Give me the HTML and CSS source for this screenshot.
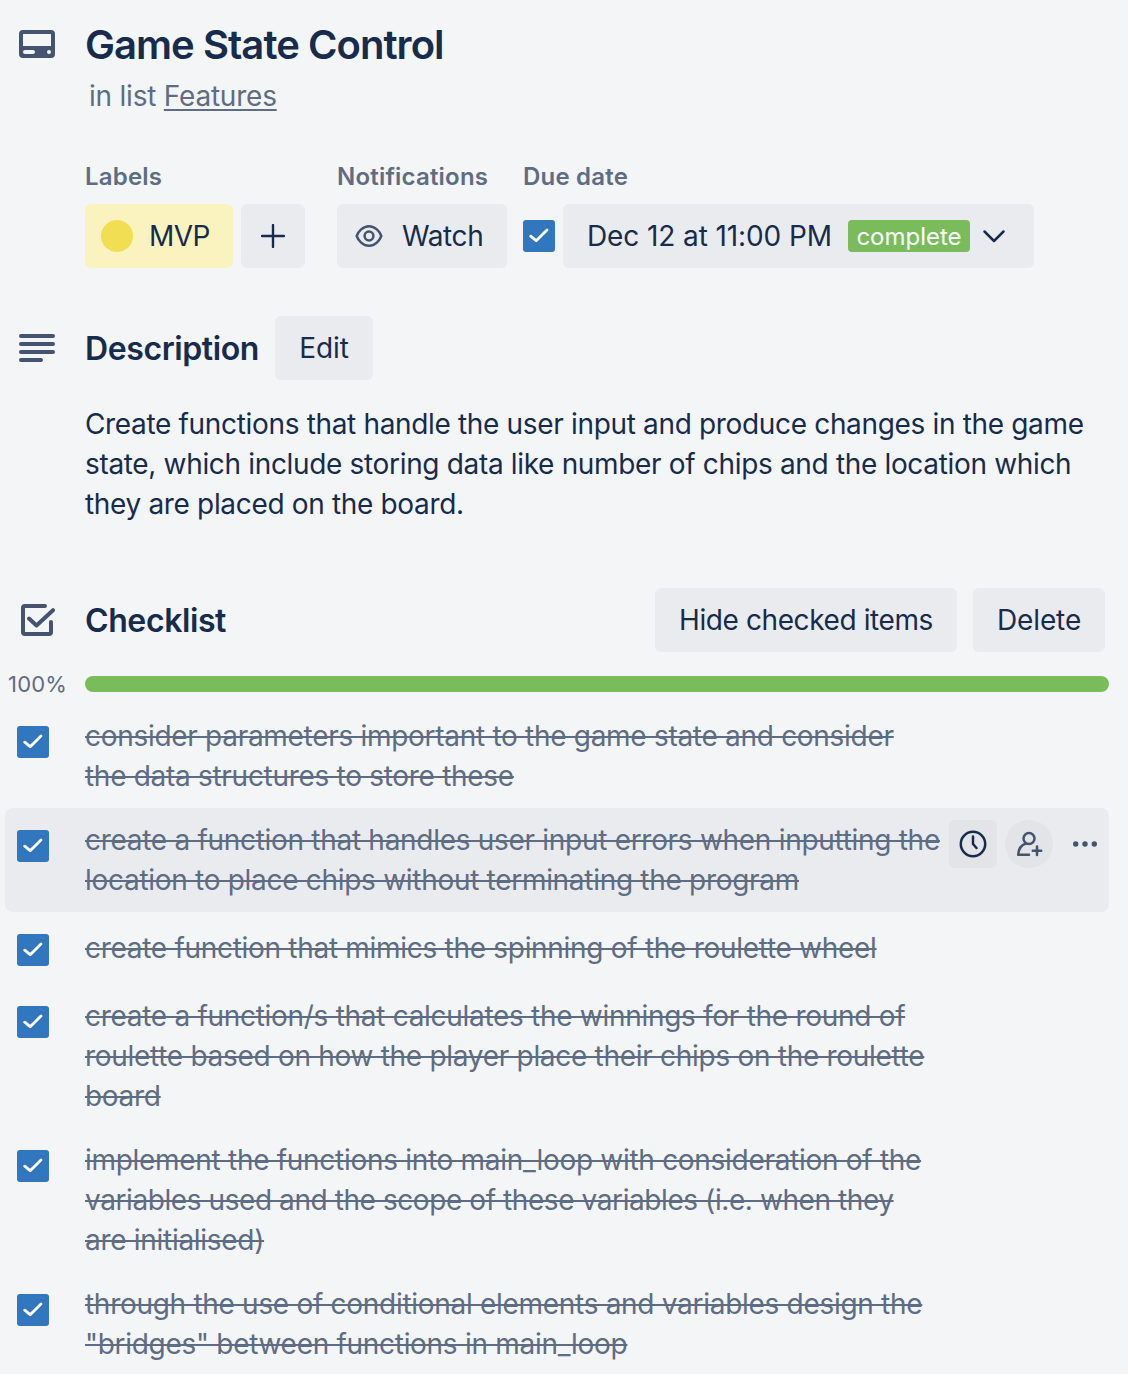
FILE: index.html
```html
<!DOCTYPE html>
<html lang="en">
<head>
<meta charset="utf-8">
<title>Game State Control</title>
<link rel="stylesheet" href="styles.css">
</head>
<body>
<svg width="0" height="0" class="defs">
  <symbol id="tick" viewBox="0 0 32 32"><path d="M7.700 16.200 13.200 20.700 24 10" fill="none" stroke="#fff" stroke-width="2.800" stroke-linecap="round" stroke-linejoin="round"/></symbol>
</svg>
<main class="card">
  <header class="header">
    <svg class="icon" width="36" height="28" viewBox="0 0 36 28"><path fill="#44546f" fill-rule="evenodd" d="M4 0h28a4 4 0 0 1 4 4v20a4 4 0 0 1-4 4H4a4 4 0 0 1-4-4V4a4 4 0 0 1 4-4Zm0 4v12h28V4ZM6 20a2 2 0 0 0 0 4h8a2 2 0 0 0 0-4Zm24 0a2 2 0 1 0 0 4 2 2 0 0 0 0-4Z"/></svg>
    <div>
      <h1 class="title">Game State Control</h1>
      <p class="sub">in list <a class="link">Features</a></p>
    </div>
  </header>

  <section class="meta">
    <div class="labels">
      <h3 class="caption">Labels</h3>
      <div class="row">
        <span class="label"><i class="dot"></i>MVP</span>
        <span class="button add"><svg width="24" height="24" viewBox="0 0 24 24"><path d="M12 1v22M1 12h22" stroke="#172b4d" stroke-width="2.4" stroke-linecap="round"/></svg></span>
      </div>
    </div>
    <div class="notifications">
      <h3 class="caption">Notifications</h3>
      <span class="button watch"><svg width="28" height="24" viewBox="0 0 28 24"><g fill="none" stroke="#44546f" stroke-width="2.500"><path d="M1.7 12C3.2 7.500 8 2.2 14 2.2S24.8 7.500 26.3 12C24.8 16.500 20 21.8 14 21.8S3.2 16.500 1.7 12Z"/><circle cx="14" cy="12" r="4.4"/></g></svg>Watch</span>
    </div>
    <div>
      <h3 class="caption">Due date</h3>
      <div class="row">
        <svg class="check"><use href="#tick"/></svg>
        <span class="button due">Dec 12 at 11:00 PM<span class="badge">complete</span><svg width="24" height="16" viewBox="0 0 24 16"><path d="M2.5 3.5 12 13 21.500 3.500" fill="none" stroke="#172b4d" stroke-width="2.5" stroke-linecap="round" stroke-linejoin="round"/></svg></span>
      </div>
    </div>
  </section>

  <section class="description">
    <div class="heading">
      <svg class="icon" width="36" height="28" viewBox="0 0 36 28"><path d="M2 2h32M2 10h32M2 18h32M2 26h20" stroke="#44546f" stroke-width="4" stroke-linecap="round"/></svg>
      <h2 class="name">Description</h2>
      <span class="button edit">Edit</span>
    </div>
    <p class="body">Create functions that handle the user input and produce changes in the game<br>state, which include storing data like number of chips and the location which<br>they are placed on the board.</p>
  </section>

  <section>
    <div class="heading">
      <svg class="icon" width="36" height="32" viewBox="0 0 36 32"><path d="M26 2H6a2 2 0 0 0-2 2v24a2 2 0 0 0 2 2h24a2 2 0 0 0 2-2V18M10 14.500 17.500 21.500 34 6.200" fill="none" stroke="#44546f" stroke-width="4" stroke-linecap="round" stroke-linejoin="round"/></svg>
      <h2 class="name">Checklist</h2>
      <span class="button hide">Hide checked items</span>
      <span class="button delete">Delete</span>
    </div>
    <div class="progress"><span class="percent">100%</span><div class="bar"></div></div>
    <ul class="items">
      <li class="item"><svg class="check"><use href="#tick"/></svg><s>consider parameters important to the game state and consider<br>the data structures to store these</s></li>
      <li class="item active"><svg class="check"><use href="#tick"/></svg><s>create a function that handles user input errors when inputting the<br>location to place chips without terminating the program</s>
        <div class="actions">
          <span class="action"><svg width="28" height="28" viewBox="0 0 28 28"><g fill="none" stroke="#172b4d" stroke-width="2.5" stroke-linecap="round" stroke-linejoin="round"><circle cx="14" cy="14" r="12.2"/><path d="M14 6.500V14l3.500 4"/></g></svg></span>
          <span class="action round"><svg width="28" height="28" viewBox="0 0 28 28"><g fill="none" stroke="#44546f" stroke-width="2.5" stroke-linecap="round" stroke-linejoin="round"><circle cx="14" cy="8.500" r="5.500"/><path d="M11 13.500C6 15 3.500 19 3.200 24.800H14M22 16.500v8.500M17.800 20.800h8.400"/></g></svg></span>
          <svg class="more" width="24" height="6" viewBox="0 0 24 6"><g fill="#44546f"><circle cx="2.700" cy="3" r="2.700"/><circle cx="12" cy="3" r="2.700"/><circle cx="21.300" cy="3" r="2.700"/></g></svg>
        </div>
      </li>
      <li class="item"><svg class="check"><use href="#tick"/></svg><s>create function that mimics the spinning of the roulette wheel</s></li>
      <li class="item"><svg class="check"><use href="#tick"/></svg><s>create a function/s that calculates the winnings for the round of<br>roulette based on how the player place their chips on the roulette<br>board</s></li>
      <li class="item"><svg class="check"><use href="#tick"/></svg><s>implement the functions into main_loop with consideration of the<br><span class="snug">variables used and the scope of these variables (i.e. when they</span><br>are initialised)</s></li>
      <li class="item"><svg class="check"><use href="#tick"/></svg><s>through the use of conditional elements and variables design the<br>"bridges" between functions in main_loop</s></li>
    </ul>
  </section>
</main>
</body>
</html>
```
FILE: styles.css
```css
* { box-sizing: border-box; margin: 0; padding: 0; }
body { background: #f4f5f7; color: #172b4d; font: 400 28px/40px Inter, "Liberation Sans", sans-serif; overflow: hidden; }
.defs { display: block; }
.card { height: 1374px; overflow: hidden; padding-top: 21px; white-space: nowrap; }
svg { flex: none; display: block; }
.icon { margin: 0 30px 0 19px; }
.header { display: flex; height: 143px; }
.header .icon { margin-top: 9px; }
.title { font-size: 40px; line-height: 48px; font-weight: 600; letter-spacing: -0.95px; }
.sub { margin: 7px 0 0 4px; color: #5e6c84; letter-spacing: -0.22px; }
.link { text-decoration: underline; text-decoration-thickness: 2px; text-underline-offset: 3px; }
.meta { display: flex; padding-left: 85px; height: 152px; }
.labels { width: 252px; }
.notifications { width: 186px; }
.caption { font-size: 24px; line-height: 24px; font-weight: 600; color: #5e6c84; padding-top: 1px; margin-bottom: 15px; letter-spacing: 0.2px; }
.row { display: flex; align-items: center; gap: 8px; }
.label, .button { height: 64px; border-radius: 6px; display: flex; align-items: center; flex: none; letter-spacing: -0.1px; }
.button { background: #eaebef; justify-content: center; }
.label { width: 148px; background: #faf3c0; padding-left: 16px; gap: 16px; letter-spacing: -0.6px; }
.dot { width: 32px; height: 32px; border-radius: 50%; background: #f2de52; }
.add { width: 64px; }
.watch { width: 170px; justify-content: flex-start; padding-left: 18px; gap: 19px; letter-spacing: -0.4px; }
.check { width: 32px; height: 32px; border-radius: 3px; background: #3277bd; }
.due { width: 471px; justify-content: flex-start; padding-left: 24px; }
.badge { width: 122px; height: 32px; margin: 0 12px 0 auto; border-radius: 4px; background: #7abc5c; color: #fff; font-size: 24px; line-height: 33px; text-align: center; letter-spacing: 0; }
.due svg { margin-right: 28px; }
.heading { display: flex; align-items: center; height: 64px; }
.name { font-size: 32px; font-weight: 600; letter-spacing: -0.4px; padding-top: 2px; }
.description { height: 272px; }
.edit { width: 98px; margin-left: 16px; }
.body { margin: 24px 0 0 85px; letter-spacing: -0.335px; }
.hide { width: 302px; margin-left: auto; letter-spacing: -0.4px; }
.delete { width: 132px; margin: 0 23px 0 16px; }
.progress { display: flex; align-items: center; height: 64px; margin-bottom: -12px; padding: 0 19px 0 8px; }
.percent { width: 77px; font-size: 22px; color: #5e6c84; letter-spacing: 0.2px; }
.bar { flex: 1; height: 16px; border-radius: 8px; background: #7abc5c; }
.items { list-style: none; padding: 0 19px 0 5px; }
.item { display: flex; align-items: center; min-height: 72px; padding: 12px 0; border-radius: 8px; color: #5e6c84; letter-spacing: -0.295px; }
.item .check { align-self: flex-start; margin: 10px 36px 0 12px; }
.item s { text-decoration-thickness: 2px; flex: none; }
.snug { letter-spacing: -0.42px; }
.active { background: #eaebef; }
.actions { display: flex; gap: 8px; align-self: flex-start; align-items: center; margin-left: auto; margin-right: 12px; }
.action { width: 48px; height: 48px; border-radius: 6px; background: #e2e4e8; display: grid; place-items: center; }
.round { border-radius: 50%; }
.more { margin-left: 12px; }
```
